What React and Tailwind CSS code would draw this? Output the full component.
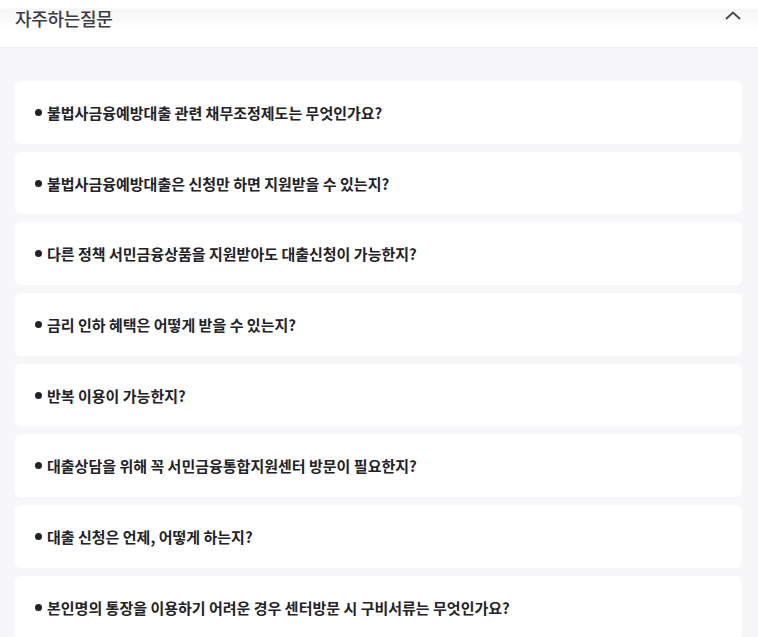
import React from "react";

const items = [
  "불법사금융예방대출 관련 채무조정제도는 무엇인가요?",
  "불법사금융예방대출은 신청만 하면 지원받을 수 있는지?",
  "다른 정책 서민금융상품을 지원받아도 대출신청이 가능한지?",
  "금리 인하 혜택은 어떻게 받을 수 있는지?",
  "반복 이용이 가능한지?",
  "대출상담을 위해 꼭 서민금융통합지원센터 방문이 필요한지?",
  "대출 신청은 언제, 어떻게 하는지?",
  "본인명의 통장을 이용하기 어려운 경우 센터방문 시 구비서류는 무엇인가요?",
];

export default function App() {
  return (
    <div
      className="w-[758px] h-[637px] overflow-hidden bg-[#f7f7f9]"
      style={{ fontFamily: '"Noto Sans CJK KR", "Noto Sans", sans-serif' }}
    >
      <div className="h-[48px] bg-white border-b border-[#eeeef0] flex items-start justify-between pl-[15px] pr-[16px] bg-gradient-to-b from-white from-[16%] via-[#f6f6f7] via-[20%] to-white to-[65%]">
        <h2 className="text-[18px] leading-[26px] mt-[5px] text-[#3b3b45] font-medium tracking-[-0.3px]">
          자주하는질문
        </h2>
        <svg width="18" height="12" viewBox="0 0 18 12" className="mt-[10px]">
          <path d="M2 9 L9 2.5 L16 9" fill="none" stroke="#4a4a55" strokeWidth="2" />
        </svg>
      </div>
      <div className="flex flex-col gap-[8px] pt-[33px] pl-[15px] pr-[16px]">
        {items.map((t) => (
          <div
            key={t}
            className="h-[62.7px] shrink-0 bg-white rounded-[6px] flex items-center pl-[20px]"
          >
            <span className="w-[7px] h-[7px] rounded-full bg-[#222228] mr-[5px] shrink-0" />
            <span className="text-[15px] font-bold text-[#222228] leading-none">
              {t}
            </span>
          </div>
        ))}
      </div>
    </div>
  );
}
